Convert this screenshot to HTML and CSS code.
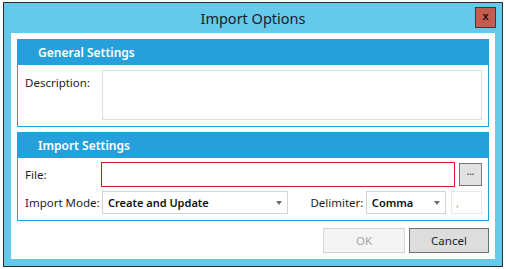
FILE: index.html
```html
<!DOCTYPE html>
<html lang="en">

<head>
    <meta charset="UTF-8">
    <meta name="viewport" content="width=device-width, initial-scale=1.0">
    <title>Import Options</title>
    <link rel="stylesheet" href="styles.css">
</head>

<body>
    <div class="window">
        <div class="titlebar">
            <span class="title">Import Options</span>
            <button class="close-button">x</button>
        </div>

        <div class="content">
            <section class="group">
                <div class="group-header">General Settings</div>
                <div class="group-body general-body">
                    <label class="field-label">Description:</label>
                    <div class="textbox description"></div>
                </div>
            </section>

            <section class="group import-group">
                <div class="group-header">Import Settings</div>
                <div class="group-body">
                    <div class="row">
                        <label class="field-label">File:</label>
                        <div class="textbox file-box"></div>
                        <button class="browse-button">...</button>
                    </div>
                    <div class="row combo-row">
                        <label class="field-label">Import Mode:</label>
                        <div class="combo mode-combo">
                            <span>Create and Update</span>
                            <span class="arrow"></span>
                        </div>
                        <label class="delimiter-label">Delimiter:</label>
                        <div class="combo delimiter-combo">
                            <span>Comma</span>
                            <span class="arrow"></span>
                        </div>
                        <div class="textbox delimiter-char">,</div>
                    </div>
                </div>
            </section>

            <div class="actions">
                <button class="btn btn-ok" disabled>OK</button>
                <button class="btn btn-cancel">Cancel</button>
            </div>
        </div>
    </div>
</body>

</html>
```

FILE: styles.css
```css
body {
    margin: 0;
    background-color: #fff;
    font-family: "Noto Sans", "Liberation Sans", sans-serif;
    font-size: 11.5px;
    color: #1e1e1e;
}

.window {
    box-sizing: border-box;
    width: 500px;
    height: 265px;
    margin: 2px 0 0 3px;
    border: 1px solid #2d2d2d;
    background-color: #65c9ea;
    display: flex;
    flex-direction: column;
}

.titlebar {
    height: 30px;
    display: grid;
    grid-template-columns: 1fr auto 1fr;
    align-items: center;
}

.title {
    grid-column: 2;
    font-size: 14.5px;
    color: #1b1b2b;
}

.close-button {
    grid-column: 3;
    justify-self: end;
    align-self: start;
    margin: 4px 6px 0 0;
    width: 21px;
    height: 21px;
    padding: 0 0 3px;
    border: 1px solid #3a3a3a;
    background-color: #c75b50;
    color: #111;
    font-family: "Liberation Sans", sans-serif;
    font-size: 11px;
    font-weight: bold;
    line-height: 1;
}

.content {
    flex: 1;
    margin: 0 7px 7px;
    padding: 6px;
    background-color: #fff;
    display: flex;
    flex-direction: column;
}

.group {
    border: 1px solid #26a0da;
    border-top: none;
}

.import-group {
    margin-top: 5px;
}

.group-header {
    height: 26px;
    margin: 0 -1px;
    padding-left: 21px;
    background-color: #26a0da;
    color: #fff;
    font-weight: 600;
    font-size: 12px;
    line-height: 27px;
}

.group-body {
    padding: 4px 6px 6px 7px;
}

.general-body {
    display: flex;
    padding-top: 5px;
}

.field-label {
    width: 77px;
    flex-shrink: 0;
    line-height: 22px;
}

.general-body .field-label {
    line-height: 26px;
}

.textbox {
    box-sizing: border-box;
    border: 1px solid #dcdce4;
    background-color: #fff;
}

.description {
    flex: 1;
    height: 50px;
}

.row {
    display: flex;
    align-items: center;
}

.file-box {
    flex: 1;
    height: 25px;
    margin-left: -1px;
    border-color: #e4141b;
}

.browse-button {
    width: 23px;
    height: 23px;
    margin-left: 4px;
    padding: 0 0 4px;
    border: 1px solid #767676;
    background-color: #e2e2e2;
    color: #445;
    font-size: 9px;
    font-weight: bold;
    line-height: 1;
}

.combo-row {
    margin-top: 4px;
}

.combo {
    box-sizing: border-box;
    height: 23px;
    padding: 0 5px 0 5px;
    border: 1px solid #d4d4d4;
    display: flex;
    align-items: center;
    justify-content: space-between;
    font-weight: 600;
    font-size: 11px;
    color: #111;
}

.arrow {
    width: 0;
    height: 0;
    border-left: 3px solid transparent;
    border-right: 3px solid transparent;
    border-top: 4px solid #6e6e6e;
    margin-top: 1px;
}

.mode-combo {
    width: 188px;
}

.delimiter-label {
    margin-left: 22px;
    width: 56px;
}

.delimiter-combo {
    width: 81px;
}

.delimiter-char {
    width: 31px;
    height: 23px;
    margin-left: 5px;
    padding: 4px 0 0 4px;
    border-color: #e8e8e8;
    color: #b89a80;
    font-size: 10px;
}

.actions {
    display: flex;
    justify-content: flex-end;
    gap: 4px;
    margin-top: 7px;
}

.btn {
    box-sizing: border-box;
    height: 25px;
    font-family: inherit;
    font-size: 11.5px;
    padding: 0;
}

.btn-ok {
    width: 82px;
    border: 1px solid #d4d4d4;
    background-color: #f4f4f4;
    color: #a6a6a6;
}

.btn-cancel {
    width: 80px;
    border: 1px solid #707070;
    background-color: #dddddd;
    color: #1e1e1e;
}
```
